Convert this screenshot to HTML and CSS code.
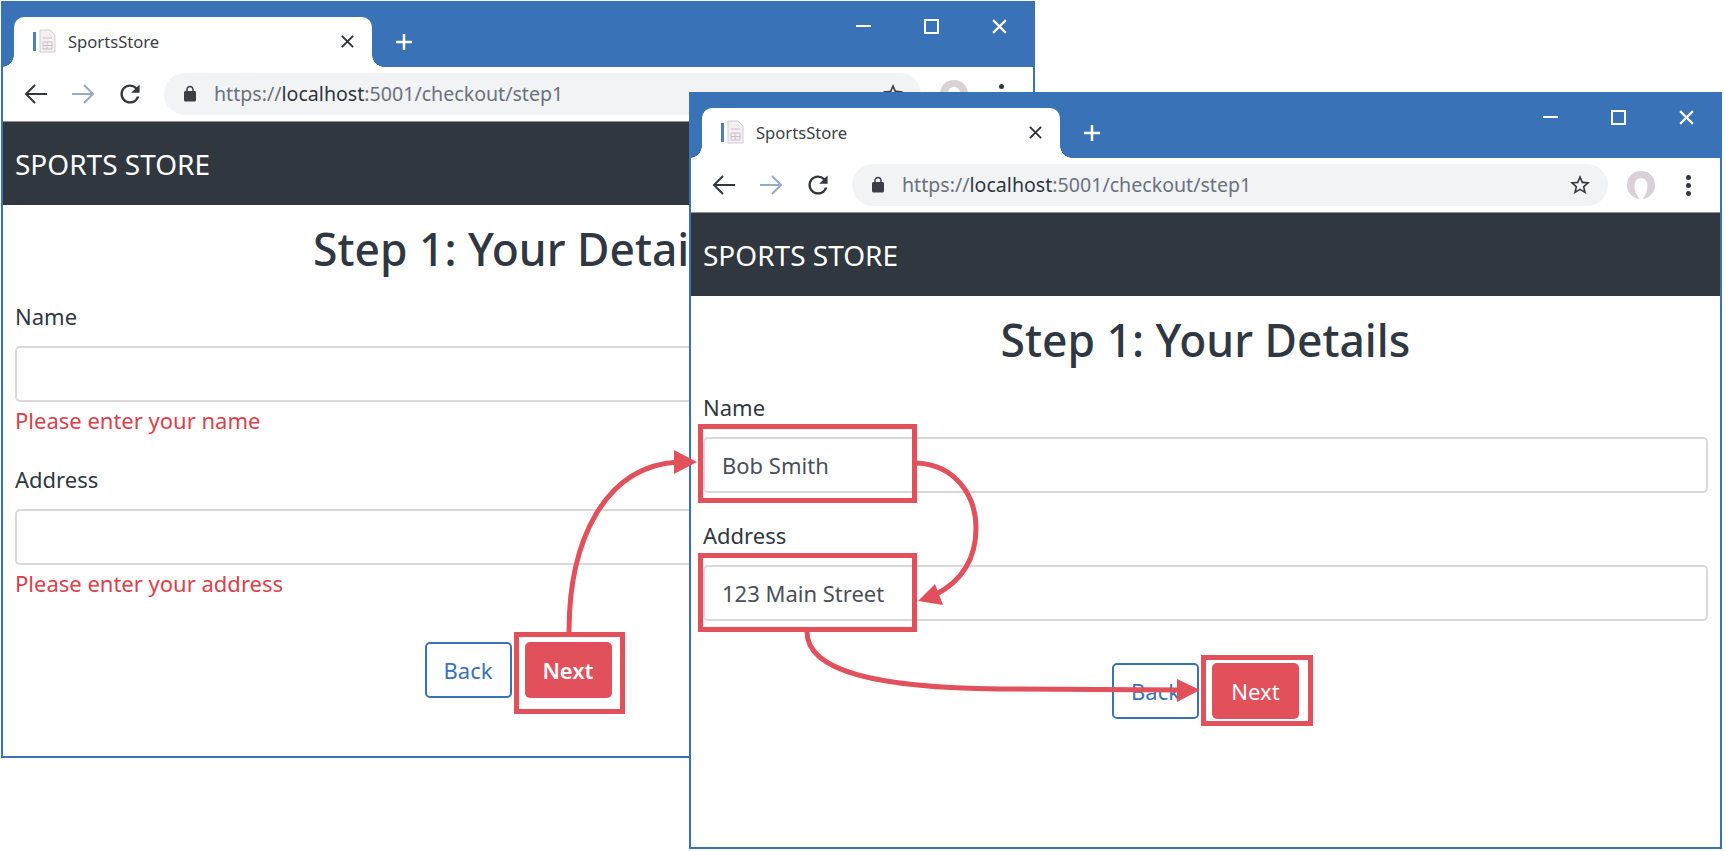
FILE: index.html
```html
<!DOCTYPE html>
<html lang="en">
<head>
  <meta charset="UTF-8">
  <title>SportsStore checkout</title>
  <link rel="stylesheet" href="styles.css">
</head>
<body>

<!-- Icons used by both windows -->
<svg class="sprite" aria-hidden="true">
  <symbol id="i-page" viewBox="0 0 24 24">
    <path d="M8 1h10l5 5v17H8z" fill="#f4eff1" stroke="#d5ccd2"/>
    <path d="M11 9h9M11 13h9v7h-9zM15 13v7M11 16.500h9" fill="none" stroke="#c9bfc6"/>
    <rect x="1" y="3" width="3" height="19" fill="#4a7fc4"/>
  </symbol>
  <symbol id="i-close" viewBox="0 0 16 16">
    <path d="M2 2l12 12M14 2L2 14" fill="none" stroke="currentColor" stroke-width="2"/>
  </symbol>
  <symbol id="i-plus" viewBox="0 0 18 18">
    <path d="M9 1v16M1 9h16" fill="none" stroke="currentColor" stroke-width="2.500"/>
  </symbol>
  <symbol id="i-back" viewBox="0 0 24 24">
    <path d="M23 12H2M11 3l-9 9 9 9" fill="none" stroke="currentColor" stroke-width="2"/>
  </symbol>
  <symbol id="i-forward" viewBox="0 0 24 24">
    <path d="M1 12h21M13 3l9 9-9 9" fill="none" stroke="currentColor" stroke-width="2"/>
  </symbol>
  <symbol id="i-reload" viewBox="2 2 20 20">
    <path d="M17.650 6.350A7.958 7.958 0 0 0 12 4c-4.420 0-7.990 3.580-7.990 8s3.570 8 7.990 8c3.730 0 6.840-2.550 7.730-6h-2.080A5.990 5.990 0 0 1 12 18c-3.310 0-6-2.690-6-6s2.690-6 6-6c1.660 0 3.140.690 4.220 1.780L13 11h7V4l-2.350 2.350z" fill="currentColor"/>
  </symbol>
  <symbol id="i-lock" viewBox="0 0 24 24">
    <path d="M18 8h-1V6c0-2.760-2.240-5-5-5S7 3.240 7 6v2H6c-1.100 0-2 .9-2 2v10c0 1.100.9 2 2 2h12c1.100 0 2-.9 2-2V10c0-1.100-.9-2-2-2zM9 6c0-1.660 1.340-3 3-3s3 1.340 3 3v2H9V6z" fill="currentColor"/>
  </symbol>
  <symbol id="i-star" viewBox="0 0 24 24">
    <path d="M22 9.240l-7.190-.62L12 2 9.190 8.630 2 9.240l5.460 4.730L5.820 21 12 17.270 18.180 21l-1.630-7.030L22 9.240zM12 15.400l-3.760 2.270 1-4.280-3.320-2.880 4.380-.38L12 6.100l1.710 4.040 4.380.38-3.320 2.880 1 4.280L12 15.400z" fill="currentColor"/>
  </symbol>
  <symbol id="i-avatar" viewBox="0 0 30 30">
    <path d="M13.500 29C6 28 1 22 1 15 1 7 7 1 15 1s14 6 14 14c0 7-5 13-12.500 14 3-4 5-8 5-13 0-5-3-8-6.500-8S8.500 11 8.500 16c0 5 2 9 5 13z" fill="#d9d1d5"/>
  </symbol>
</svg>

<!-- First window: validation errors -->
<div class="window window-errors">
  <div class="titlebar">
    <div class="tab">
      <svg class="favicon"><use href="#i-page"/></svg>
      <span class="tab-title">SportsStore</span>
      <svg class="tab-close"><use href="#i-close"/></svg>
    </div>
    <svg class="new-tab"><use href="#i-plus"/></svg>
    <div class="window-controls">
      <div class="control"><span class="minimize"></span></div>
      <div class="control"><span class="maximize"></span></div>
      <div class="control"><svg class="control-close"><use href="#i-close"/></svg></div>
    </div>
  </div>
  <div class="toolbar">
    <svg class="nav-icon"><use href="#i-back"/></svg>
    <svg class="nav-icon nav-disabled"><use href="#i-forward"/></svg>
    <svg class="nav-icon"><use href="#i-reload"/></svg>
    <div class="omnibox">
      <svg class="lock"><use href="#i-lock"/></svg>
      <span class="url">https://<b>localhost</b>:5001/checkout/step1</span>
      <svg class="star"><use href="#i-star"/></svg>
    </div>
    <svg class="avatar"><use href="#i-avatar"/></svg>
    <div class="menu-dots"><i></i><i></i><i></i></div>
  </div>
  <div class="navbar">SPORTS STORE</div>
  <div class="content">
    <h2>Step 1: Your Details</h2>
    <div class="field">
      <label>Name</label>
      <input class="text-input" type="text">
      <div class="error">Please enter your name</div>
    </div>
    <div class="field">
      <label>Address</label>
      <input class="text-input" type="text">
      <div class="error">Please enter your address</div>
    </div>
    <div class="buttons">
      <button class="btn btn-back">Back</button>
      <button class="btn btn-next btn-bold">Next</button>
    </div>
  </div>
</div>

<!-- Second window: filled in -->
<div class="window window-filled">
  <div class="titlebar">
    <div class="tab">
      <svg class="favicon"><use href="#i-page"/></svg>
      <span class="tab-title">SportsStore</span>
      <svg class="tab-close"><use href="#i-close"/></svg>
    </div>
    <svg class="new-tab"><use href="#i-plus"/></svg>
    <div class="window-controls">
      <div class="control"><span class="minimize"></span></div>
      <div class="control"><span class="maximize"></span></div>
      <div class="control"><svg class="control-close"><use href="#i-close"/></svg></div>
    </div>
  </div>
  <div class="toolbar">
    <svg class="nav-icon"><use href="#i-back"/></svg>
    <svg class="nav-icon nav-disabled"><use href="#i-forward"/></svg>
    <svg class="nav-icon"><use href="#i-reload"/></svg>
    <div class="omnibox">
      <svg class="lock"><use href="#i-lock"/></svg>
      <span class="url">https://<b>localhost</b>:5001/checkout/step1</span>
      <svg class="star"><use href="#i-star"/></svg>
    </div>
    <svg class="avatar"><use href="#i-avatar"/></svg>
    <div class="menu-dots"><i></i><i></i><i></i></div>
  </div>
  <div class="navbar">SPORTS STORE</div>
  <div class="content">
    <h2>Step 1: Your Details</h2>
    <div class="field">
      <label>Name</label>
      <input class="text-input" type="text" value="Bob Smith">
    </div>
    <div class="field">
      <label>Address</label>
      <input class="text-input" type="text" value="123 Main Street">
    </div>
    <div class="buttons">
      <button class="btn btn-back">Back</button>
      <button class="btn btn-next">Next</button>
    </div>
  </div>
</div>

<!-- Red callouts drawn over both windows -->
<svg class="annotations" viewBox="0 0 1725 851">
  <rect x="516.500" y="634.500" width="106" height="77"/>
  <rect x="700.500" y="426.500" width="214" height="74"/>
  <rect x="700.500" y="555.500" width="214" height="74"/>
  <rect x="1203.500" y="657.500" width="107" height="66"/>
  <path d="M569 632C569 540 605 466 678 462"/>
  <path class="head" d="M697 462L674 450V474z"/>
  <path d="M917 463C955 465 976 495 976 528C976 560 960 582 935 595"/>
  <path class="head" d="M918 601L935 584L943 605z"/>
  <path d="M807 632C807 672 880 688 1000 689L1180 690"/>
  <path class="head" d="M1200 690L1177 679V702z"/>
</svg>

</body>
</html>
```

FILE: styles.css
```css
html, body {
  margin: 0;
  height: 100%;
  background-color: white;
  overflow: hidden;
}

body {
  position: relative;
  font-family: "Noto Sans", sans-serif;
  font-size: 22px;
  color: #2f3742;
}

.sprite {
  display: none;
}

/* Windows sit on a free canvas */
.window {
  position: absolute;
  box-sizing: border-box;
  width: 1034px;
  height: 757px;
  border: 2px solid #3a72b8;
  background-color: white;
  display: flex;
  flex-direction: column;
}

.window-errors {
  left: 1px;
  top: 1px;
}

.window-filled {
  left: 689px;
  top: 92px;
  width: 1033px;
}

/* Title bar */
.titlebar {
  height: 64px;
  flex: none;
  display: flex;
  align-items: flex-end;
  background-color: #3a72b8;
  color: white;
}

.tab {
  position: relative;
  box-sizing: border-box;
  width: 358px;
  height: 50px;
  margin-left: 11px;
  padding: 0 17px 2px 18px;
  display: flex;
  align-items: center;
  background-color: white;
  border-radius: 10px 10px 0 0;
  color: #3a3f46;
  font-size: 16.600px;
}

.tab::before,
.tab::after {
  content: "";
  position: absolute;
  bottom: 0;
  width: 12px;
  height: 12px;
}

.tab::before {
  left: -12px;
  background: radial-gradient(circle at 0 0, transparent 11.500px, white 12px);
}

.tab::after {
  right: -12px;
  background: radial-gradient(circle at 100% 0, transparent 11.500px, white 12px);
}

.favicon {
  width: 24px;
  height: 24px;
  flex: none;
}

.tab-title {
  margin-left: 12px;
  flex: 1;
}

.tab-close {
  width: 15px;
  height: 15px;
  color: #2f3338;
}

.new-tab {
  width: 18px;
  height: 18px;
  margin: 0 0 16px 23px;
  color: white;
}

.window-controls {
  margin-left: auto;
  align-self: flex-start;
  display: flex;
}

.control {
  width: 68px;
  height: 46px;
  display: flex;
  align-items: center;
  justify-content: center;
}

.minimize {
  width: 15px;
  height: 2px;
  background-color: white;
}

.maximize {
  box-sizing: border-box;
  width: 15px;
  height: 15px;
  border: 2px solid white;
}

.control-close {
  width: 17px;
  height: 17px;
  color: white;
}

/* Toolbar */
.toolbar {
  box-sizing: border-box;
  height: 55px;
  flex: none;
  display: flex;
  align-items: center;
  padding: 0 28px 0 21px;
  gap: 23px;
  border-bottom: 1px solid #8f9194;
  background-color: white;
  color: #33373d;
}

.nav-icon {
  width: 24px;
  height: 24px;
  flex: none;
}

.nav-disabled {
  color: #97a8c9;
}

.omnibox {
  flex: 1;
  height: 42px;
  display: flex;
  align-items: center;
  padding: 0 16px 0 17px;
  border-radius: 21px;
  background-color: #f1f3f4;
  margin-left: -1px;
}

.lock {
  width: 18px;
  height: 18px;
  color: #3b3f45;
}

.url {
  flex: 1;
  margin: 0 0 2px 15px;
  font-size: 19.600px;
  color: #6a7280;
}

.url b {
  font-weight: 400;
  color: #2f3640;
}

.star {
  width: 24px;
  height: 24px;
}

.avatar {
  width: 30px;
  height: 30px;
  flex: none;
  margin-left: -5px;
}

.menu-dots {
  width: 6px;
  margin-left: 7px;
  display: flex;
  flex-direction: column;
  gap: 3px;
}

.menu-dots i {
  width: 5px;
  height: 5px;
  border-radius: 50%;
  background-color: #33373d;
}

/* Page header */
.navbar {
  height: 83px;
  flex: none;
  display: flex;
  align-items: center;
  padding-left: 12px;
  background-color: #31373f;
  color: white;
  font-size: 28px;
}

/* Form */
.content {
  padding: 0 12px;
}

h2 {
  margin: 18px 0 24px;
  text-align: center;
  font-size: 44.400px;
  font-weight: 500;
  line-height: 53px;
}

.field {
  margin-bottom: 26px;
}

label {
  display: block;
  line-height: 33px;
  margin-bottom: 13px;
}

.text-input {
  display: block;
  box-sizing: border-box;
  width: 100%;
  height: 56px;
  padding: 0 17px;
  border: 2px solid #ddd6da;
  border-radius: 5px;
  font: inherit;
  color: #4a4f5a;
}

.error {
  line-height: 33px;
  margin-top: 2px;
  color: #dc3f4c;
}

.buttons {
  margin-top: 42px;
  display: flex;
  justify-content: center;
  gap: 13px;
}

.btn {
  box-sizing: border-box;
  width: 87px;
  height: 56px;
  padding: 0;
  border-radius: 5px;
  font: inherit;
}

.btn-back {
  border: 2px solid #3a72b8;
  background-color: white;
  color: #3a72b8;
}

.btn-next {
  border: none;
  background-color: #e2505c;
  color: white;
}

.btn-bold {
  font-weight: 600;
}

/* Callouts */
.annotations {
  position: absolute;
  left: 0;
  top: 0;
  width: 1725px;
  height: 851px;
  fill: none;
  stroke: #e2505c;
  stroke-width: 5;
}

.annotations .head {
  fill: #e2505c;
  stroke: none;
}
```
